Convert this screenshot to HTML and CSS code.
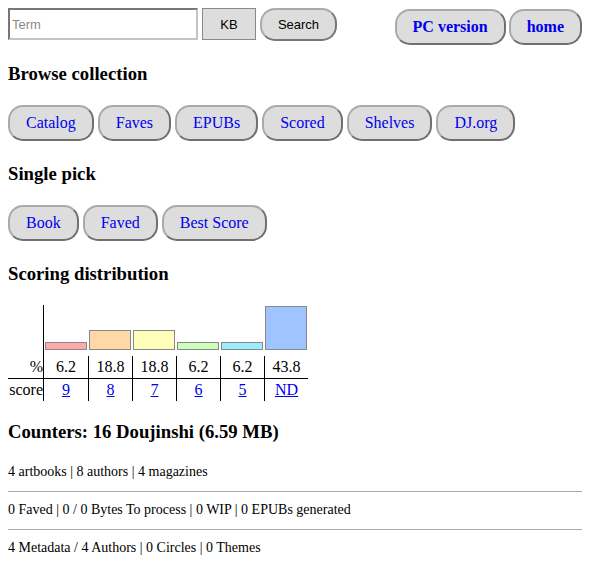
FILE: index.html
```html
<!DOCTYPE html>
<html>
<head>
<meta charset="utf-8">
<link rel="stylesheet" href="styles.css">
</head>
<body>
<div class="top">
  <form class="search">
    <input class="term" type="text" placeholder="Term">
    <button type="button" class="kb">KB</button>
    <button type="button" class="go">Search</button>
  </form>
  <div class="links">
    <a class="btn strong" href="#">PC version</a>
    <a class="btn strong" href="#">home</a>
  </div>
</div>

<h3 class="head">Browse collection</h3>
<div class="row">
  <a class="btn" href="#">Catalog</a>
  <a class="btn" href="#">Faves</a>
  <a class="btn" href="#">EPUBs</a>
  <a class="btn" href="#">Scored</a>
  <a class="btn" href="#">Shelves</a>
  <a class="btn" href="#">DJ.org</a>
</div>

<h3 class="head">Single pick</h3>
<div class="row">
  <a class="btn" href="#">Book</a>
  <a class="btn" href="#">Faved</a>
  <a class="btn" href="#">Best Score</a>
</div>

<h3 class="head">Scoring distribution</h3>
<div class="chart">
  <div class="lbl"></div>
  <div class="bcell"><div class="bar c1" style="height:8px"></div></div>
  <div class="bcell"><div class="bar c2" style="height:20px"></div></div>
  <div class="bcell"><div class="bar c3" style="height:20px"></div></div>
  <div class="bcell"><div class="bar c4" style="height:8px"></div></div>
  <div class="bcell"><div class="bar c5" style="height:8px"></div></div>
  <div class="bcell"><div class="bar c6" style="height:44px"></div></div>

  <div class="lbl pc">%</div>
  <div class="val">6.2</div>
  <div class="val sep">18.8</div>
  <div class="val sep">18.8</div>
  <div class="val sep">6.2</div>
  <div class="val sep">6.2</div>
  <div class="val sep">43.8</div>

  <div class="lbl sc">score</div>
  <div class="val sc"><a href="#">9</a></div>
  <div class="val sc sep"><a href="#">8</a></div>
  <div class="val sc sep"><a href="#">7</a></div>
  <div class="val sc sep"><a href="#">6</a></div>
  <div class="val sc sep"><a href="#">5</a></div>
  <div class="val sc sep"><a href="#">ND</a></div>
</div>

<h3 class="head counters">Counters: 16 Doujinshi (6.59 MB)</h3>
<p class="stat">4 artbooks | 8 authors | 4 magazines</p>
<hr class="rule">
<p class="stat">0 Faved | 0 / 0 Bytes To process | 0 WIP | 0 EPUBs generated</p>
<hr class="rule">
<p class="stat">4 Metadata / 4 Authors | 0 Circles | 0 Themes</p>
</body>
</html>
```

FILE: styles.css
```css
body {
  margin: 8px;
  font-family: "Liberation Serif", "Times New Roman", Tinos, "DejaVu Serif", serif;
  font-size: 16px;
  color: #000;
  background: #fff;
}

.top {
  display: flex;
  justify-content: space-between;
  align-items: flex-start;
}

.search {
  display: flex;
  gap: 4px;
  margin: 0;
}

.term {
  box-sizing: border-box;
  width: 190px;
  height: 32px;
  border: 2px solid;
  border-color: #777 #c4c4c4 #c4c4c4 #777;
  padding: 0 2px;
  font-family: "Liberation Sans", Arial, sans-serif;
  font-size: 13px;
  margin: 0;
}
.term::placeholder { color: #8a8a8a; }

.kb {
  box-sizing: border-box;
  width: 54px;
  height: 32px;
  background: #ddd;
  border: 1px solid #888;
  font-family: "Liberation Sans", Arial, sans-serif;
  font-size: 13px;
  margin: 0;
}

.go {
  box-sizing: border-box;
  height: 33px;
  width: 77px;
  background: #ddd;
  border: 2px solid;
  border-color: #aaa #777 #777 #aaa;
  border-radius: 15px;
  font-family: "Liberation Sans", Arial, sans-serif;
  font-size: 13px;
  margin: 0;
  padding: 0;
}

.links {
  display: flex;
  gap: 3px;
  margin-top: 1px;
}

.btn {
  box-sizing: border-box;
  display: inline-block;
  height: 36px;
  line-height: 32px;
  padding: 0 16px;
  background: #ddd;
  border: 2px solid;
  border-color: #aaa #707070 #707070 #aaa;
  border-radius: 15px;
  color: #00e;
  text-decoration: none;
  white-space: nowrap;
}
.btn.strong { font-weight: bold; }

.head {
  font-size: 18.72px;
  font-weight: bold;
  line-height: 22px;
  margin: 18px 0 20px;
}

.row {
  display: flex;
  gap: 4px;
  margin-bottom: 22px;
}
.row + .head { margin-top: 0; }

.chart {
  display: grid;
  grid-template-columns: 36px repeat(6, 44px);
  grid-template-rows: 51px 22px 23px;
  width: 300px;
}

.lbl {
  border-right: 1px solid #000;
  text-align: right;
}
.lbl.pc, .val { line-height: 22px; }

.bcell {
  display: flex;
  align-items: flex-end;
  padding: 1px 1px 6px;
}
.bar {
  box-sizing: border-box;
  width: 42px;
  border: 1px solid #888;
}
.c1 { background: #ffaaaa; }
.c2 { background: #ffd8a8; }
.c3 { background: #ffffbb; }
.c4 { background: #ccffbb; }
.c5 { background: #99eeff; }
.c6 { background: #a0c4ff; }

.val {
  text-align: center;
}
.val.sep { border-left: 1px solid #000; }
.sc {
  border-top: 1px solid #000;
  line-height: 22px;
}
.val a { color: #00e; }

.counters { margin: 20px 0 20px; }

.stat {
  font-size: 14px;
  line-height: 18px;
  margin: 0;
}
.rule {
  border: 0;
  border-top: 1px solid #aaa;
  margin: 10px 0 9px;
}
```
